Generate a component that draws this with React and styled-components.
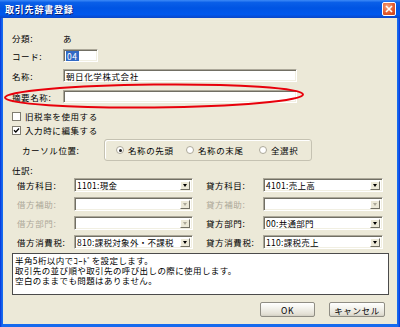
import React from 'react';
import styled, { createGlobalStyle } from 'styled-components';

const GlobalStyle = createGlobalStyle`
  html, body { margin: 0; padding: 0; background: #fff; }
  body { font-family: "Noto Sans CJK JP", "Noto Sans", sans-serif; }
`;

const Window = styled.div`
  position: relative;
  width: 400px;
  height: 327px;
  box-sizing: border-box;
  display: flex;
  flex-direction: column;
  background: linear-gradient(90deg, #0831d9, #166aee 2px, #166aee calc(100% - 2px), #0831d9);
  font-size: 8.5px;
  letter-spacing: 0.6px;
  color: #000;
  overflow: hidden;
`;

const TitleBar = styled.div`
  flex: none;
  height: 18px;
  display: flex;
  align-items: center;
  justify-content: space-between;
  padding: 0 4px 0 5px;
  background: linear-gradient(180deg, #3d8af7 0%, #0a5fe8 14%, #0054e3 45%, #0058ee 80%, #0a46c8 100%);
`;

const Title = styled.span`
  color: #fff;
  font-weight: bold;
  font-size: 9px;
  letter-spacing: 0.8px;
  text-shadow: 1px 1px 0 #0a1e73;
`;

const CloseButton = styled.div`
  width: 14px;
  height: 14px;
  box-sizing: border-box;
  border: 1px solid #fff;
  border-radius: 2px;
  background: radial-gradient(circle at 35% 30%, #f4a27c, #e2582b 60%, #c0401a);
  display: flex;
  align-items: center;
  justify-content: center;
`;

const Body = styled.div`
  flex: 1;
  margin: 0 3px 3px;
  background: #ece9d8;
  padding: 14px 8px 0 9px;
  display: flex;
  flex-direction: column;
`;

const Row = styled.div`
  flex: none;
  display: flex;
  align-items: center;
  height: ${(p) => p.h || 12}px;
  margin-top: ${(p) => p.mt || 0}px;
`;

const Label = styled.span`
  flex: none;
  width: ${(p) => (p.w ? `${p.w}px` : 'auto')};
  padding-left: ${(p) => p.indent || 0}px;
  white-space: nowrap;
  color: ${(p) => (p.disabled ? '#aca899' : '#000')};
`;

const TextBox = styled.div`
  flex: none;
  width: ${(p) => p.w}px;
  height: 13px;
  box-sizing: border-box;
  background: #fff;
  border: 1px solid;
  border-color: #aca899 #fff #fff #aca899;
  box-shadow: inset 1px 1px 0 #716f64, inset -1px -1px 0 #f1efe2;
  display: flex;
  align-items: center;
  padding-left: 2px;
  white-space: nowrap;
`;

const Selected = styled.span`
  background: #316ac5;
  color: #fff;
  padding: 0 1px;
  line-height: 10px;
`;

const CheckBox = styled.span`
  flex: none;
  width: 9px;
  height: 9px;
  box-sizing: border-box;
  background: #fff;
  border: 1px solid #7f7c70;
  margin-right: 4px;
  display: flex;
  align-items: center;
  justify-content: center;
`;

const GroupBox = styled.div`
  flex: none;
  width: 208px;
  height: 22px;
  box-sizing: border-box;
  border: 1px solid #c5c2b2;
  border-radius: 3px;
  box-shadow: inset 1px 1px 0 #fff;
  display: flex;
  align-items: center;
  padding-left: 11px;
`;

const RadioOption = styled.span`
  flex: none;
  width: ${(p) => p.w}px;
  display: flex;
  align-items: center;
  white-space: nowrap;
`;

const RadioDot = styled.span`
  flex: none;
  width: 8px;
  height: 8px;
  box-sizing: border-box;
  border-radius: 50%;
  border: 1px solid #aca899;
  background: #fff;
  margin-right: 4px;
  display: flex;
  align-items: center;
  justify-content: center;

  &::after {
    content: '';
    width: 3px;
    height: 3px;
    border-radius: 50%;
    background: ${(p) => (p.checked ? '#222' : 'transparent')};
  }
`;

const Grid = styled.div`
  flex: none;
  display: grid;
  grid-template-columns: 57px 119px 70px 120px;
  grid-auto-rows: 14px;
  row-gap: 5px;
  align-items: center;
  padding-left: 5px;
  margin-top: 2px;
`;

const SelectBox = styled.div`
  height: 14px;
  box-sizing: border-box;
  background: #fff;
  border: 1px solid;
  border-color: #aca899 #fff #fff #aca899;
  box-shadow: inset 1px 1px 0 #716f64, inset -1px -1px 0 #f1efe2;
  display: flex;
  align-items: center;
  justify-content: space-between;
  padding: 0 2px 0 2px;
  white-space: nowrap;
  letter-spacing: 0.3px;
`;

const DropButton = styled.span`
  flex: none;
  width: 10px;
  height: 9px;
  box-sizing: border-box;
  background: #ece9d8;
  border: 1px solid;
  border-color: #fff #716f64 #716f64 #fff;
  display: flex;
  align-items: center;
  justify-content: center;

  &::after {
    content: '';
    border-left: 2.5px solid transparent;
    border-right: 2.5px solid transparent;
    border-top: 3px solid ${(p) => (p.disabled ? '#aca899' : '#000')};
  }
`;

const Memo = styled.div`
  flex: none;
  height: 42px;
  box-sizing: border-box;
  margin-top: 4px;
  background: #fff;
  border: 1px solid #4b4b4b;
  padding: 1px 2px;
  letter-spacing: 0.4px;
`;

const MemoLine = styled.div`
  height: 10px;
  line-height: 10px;
  white-space: nowrap;
`;

const Footer = styled.div`
  flex: none;
  display: flex;
  justify-content: flex-end;
  gap: 14px;
  margin-top: 7px;
  padding-right: 4px;
`;

const Button = styled.div`
  width: ${(p) => p.w}px;
  height: 15px;
  box-sizing: border-box;
  border: 1px solid #8f8d84;
  border-radius: 2px;
  background: linear-gradient(180deg, #ffffff 0%, #f3f2ec 40%, #e3e0d5 85%, #d2cfc3 100%);
  display: flex;
  align-items: center;
  justify-content: center;
`;

const Overlay = styled.svg`
  position: absolute;
  top: 0;
  left: 0;
  pointer-events: none;
`;

const Select = ({ value, disabled }) => (
  <SelectBox>
    <span>{value}</span>
    <DropButton disabled={disabled} />
  </SelectBox>
);

const rows = [
  ['借方科目:', '1101:現金', false, '貸方科目:', '4101:売上高', false],
  ['借方補助:', '', true, '貸方補助:', '', true],
  ['借方部門:', '', true, '貸方部門:', '00:共通部門', false],
  ['借方消費税:', '810:課税対象外・不課税', false, '貸方消費税:', '110:課税売上', false],
];

const memoLines = [
  '半角5桁以内でｺｰﾄﾞを設定します。',
  '取引先の並び順や取引先の呼び出しの際に使用します。',
  '空白のままでも問題はありません。',
];

const App = () => {
  return (
    <>
      <GlobalStyle />
      <Window>
        <TitleBar>
          <Title>取引先辞書登録</Title>
          <CloseButton>
            <svg width="8" height="8" viewBox="0 0 8 8">
              <path d="M1 1L7 7M7 1L1 7" stroke="#fff" strokeWidth="1.6" />
            </svg>
          </CloseButton>
        </TitleBar>
        <Body>
          <Row h={12}>
            <Label w={51}>分類:</Label>
            <span>あ</span>
          </Row>
          <Row h={13} mt={5}>
            <Label w={51}>コード:</Label>
            <TextBox w={35}>
              <Selected>04</Selected>
            </TextBox>
          </Row>
          <Row h={13} mt={7}>
            <Label w={51}>名称:</Label>
            <TextBox w={234}>朝日化学株式会社</TextBox>
          </Row>
          <Row h={13} mt={8}>
            <Label w={51}>摘要名称:</Label>
            <TextBox w={234} />
          </Row>
          <Row h={12} mt={7}>
            <CheckBox />
            <span>旧税率を使用する</span>
          </Row>
          <Row h={12} mt={2}>
            <CheckBox>
              <svg width="7" height="7" viewBox="0 0 7 7">
                <path d="M1 3.2L2.8 5L6 1.5" stroke="#000" strokeWidth="1.3" fill="none" />
              </svg>
            </CheckBox>
            <span>入力時に編集する</span>
          </Row>
          <Row h={22} mt={3}>
            <Label w={82} indent={10}>カーソル位置:</Label>
            <GroupBox>
              <RadioOption w={70}>
                <RadioDot checked />
                名称の先頭
              </RadioOption>
              <RadioOption w={73}>
                <RadioDot />
                名称の末尾
              </RadioOption>
              <RadioOption w={40}>
                <RadioDot />
                全選択
              </RadioOption>
            </GroupBox>
          </Row>
          <Row h={12} mt={3}>
            <Label>仕訳:</Label>
          </Row>
          <Grid>
            {rows.map(([l1, v1, d1, l2, v2, d2]) => (
              <React.Fragment key={l1}>
                <Label disabled={d1}>{l1}</Label>
                <Select value={v1} disabled={d1} />
                <Label disabled={d2} indent={13}>{l2}</Label>
                <Select value={v2} disabled={d2} />
              </React.Fragment>
            ))}
          </Grid>
          <Memo>
            {memoLines.map((line) => (
              <MemoLine key={line}>{line}</MemoLine>
            ))}
          </Memo>
          <Footer>
            <Button w={55}>OK</Button>
            <Button w={56}>キャンセル</Button>
          </Footer>
        </Body>
        <Overlay width="400" height="327">
          <ellipse
            cx="154"
            cy="96"
            rx="149"
            ry="11.5"
            fill="none"
            stroke="#e8000b"
            strokeWidth="2"
            transform="rotate(-0.6 154 96)"
          />
        </Overlay>
      </Window>
    </>
  );
};

export default App;
